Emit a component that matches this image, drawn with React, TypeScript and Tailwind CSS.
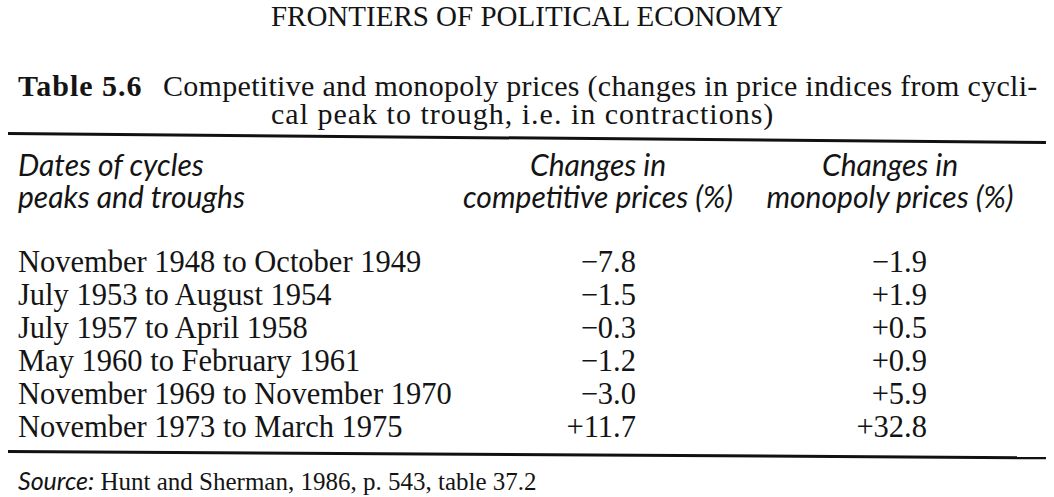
const rows = [
  { dates: "November 1948 to October 1949", comp: "\u22127.8", mono: "\u22121.9" },
  { dates: "July 1953 to August 1954", comp: "\u22121.5", mono: "+1.9" },
  { dates: "July 1957 to April 1958", comp: "\u22120.3", mono: "+0.5" },
  { dates: "May 1960 to February 1961", comp: "\u22121.2", mono: "+0.9" },
  { dates: "November 1969 to November 1970", comp: "\u22123.0", mono: "+5.9" },
  { dates: "November 1973 to March 1975", comp: "+11.7", mono: "+32.8" },
];

const serif = { fontFamily: '"Liberation Serif", serif' };
const italicSans = { fontFamily: 'Lato, sans-serif' };

export default function App() {
  return (
    <div
      className="h-[497px] w-[1054px] overflow-hidden bg-white text-[#141414]"
      style={serif}
    >
      <div className="pt-px text-center text-[29px] leading-[30px]">
        FRONTIERS OF POLITICAL ECONOMY
      </div>

      {/* caption */}
      <div className="mt-[41px] pl-[18px] text-[30px] leading-[28px]">
        <div className="flex whitespace-nowrap">
          <span className="w-[145px] shrink-0 font-bold tracking-[1px]">Table 5.6</span>
          <span className="tracking-[0.3px]">
            Competitive and monopoly prices (changes in price indices from cycli-
          </span>
        </div>
        <div className="pl-[253px] tracking-[1px]">cal peak to trough, i.e. in contractions)</div>
      </div>

      <div className="mx-[8px] mt-[4px] h-[3px] origin-left rotate-[0.5deg] bg-[#111]" />

      {/* column heads */}
      <div
        className="mt-[13px] grid grid-cols-[430px_300px_284px] pl-[18px] text-[30px] italic leading-[32px]"
        style={italicSans}
      >
        <div>
          Dates of cycles
          <br />
          peaks and troughs
        </div>
        <div className="text-center">
          Changes in
          <br />
          competitive prices (%)
        </div>
        <div className="text-center">
          Changes in
          <br />
          monopoly prices (%)
        </div>
      </div>

      {/* rows */}
      <div className="mt-[34px] pl-[18px] text-[30.5px] leading-[33px]">
        {rows.map((r) => (
          <div key={r.dates} className="grid grid-cols-[618px_291px]">
            <div className="flex justify-between">
              <span>{r.dates}</span>
              <span>{r.comp}</span>
            </div>
            <div className="text-right">{r.mono}</div>
          </div>
        ))}
      </div>

      <div className="mx-[8px] mt-[6px] h-[3px] origin-left rotate-[0.35deg] bg-[#111]" />

      <div className="mt-[12px] pl-[18px] text-[25px] leading-[30px]">
        <span className="italic" style={italicSans}>
          Source:
        </span>{" "}
        Hunt and Sherman, 1986, p. 543, table 37.2
      </div>
    </div>
  );
}
